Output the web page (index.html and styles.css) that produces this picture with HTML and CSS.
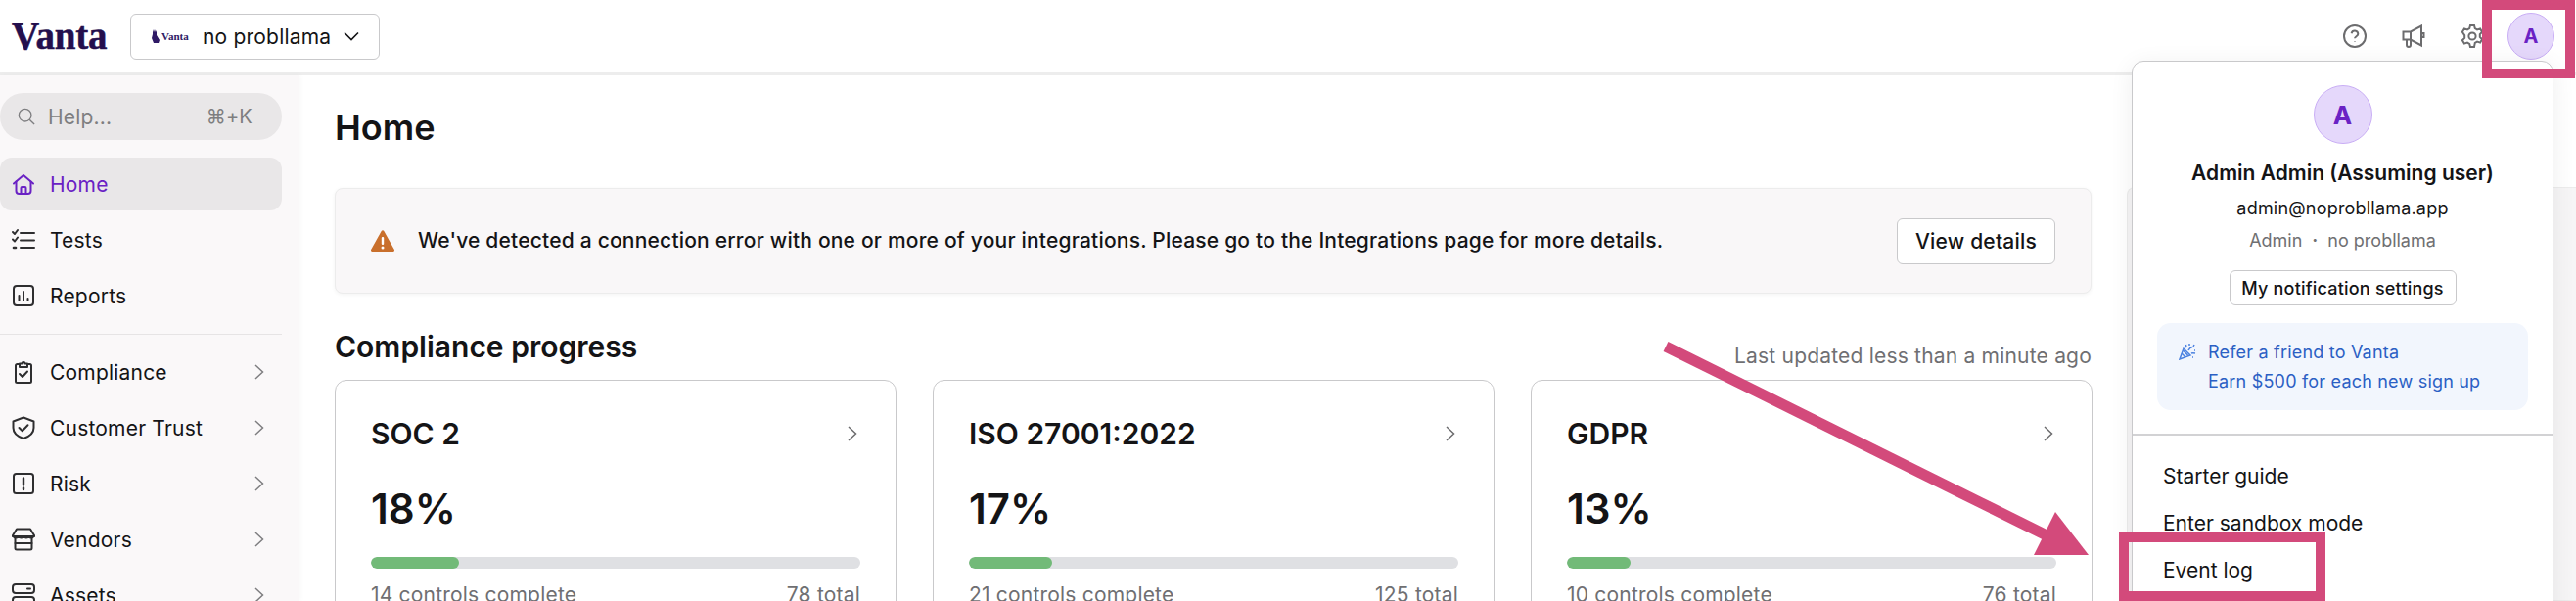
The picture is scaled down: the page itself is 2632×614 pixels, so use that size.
FILE: index.html
```html
<!DOCTYPE html>
<html lang="en">
<head>
<meta charset="utf-8">
<title>Vanta Home</title>
<link rel="stylesheet" href="styles.css">
</head>
<body>
<div class="app">
  <header class="topbar">
    <span class="logo">Vanta</span>
    <button class="org">
      <span class="org-logo">
        <svg class="org-rabbit" viewBox="0 0 10 14"><path d="M1 0l1 3 1-3 1 3 1-2v5l3 5-1 3H2L0 9l1-4z"/></svg>
        <span class="org-logo-text">Vanta</span>
      </span>
      <span class="org-name">no probllama</span>
      <svg class="org-chev" viewBox="0 0 16 10"><path d="M1 1.500l7 7 7-7"/></svg>
    </button>
    <div class="top-icons">
      <svg class="top-icon" viewBox="0 0 24 24"><circle cx="12" cy="12" r="11"/><path d="M8.600 9.200a3.400 3.400 0 0 1 6.700.6c0 2.300-3.300 2.500-3.300 4.400"/><path d="M12 17.400v.6"/></svg>
      <svg class="top-icon" viewBox="0 0 24 24"><path d="M1.500 7.500h7.500L20 1.500v20L9 15.500H1.500z"/><path d="M20 9h2.500v4H20"/><path d="M5 15.500V21a2 2 0 0 0 4 0v-5.500"/><path d="M9 7.500v8"/></svg>
      <svg class="top-icon" viewBox="0 0 24 24"><circle cx="12" cy="12" r="3.600"/><path d="M10 1h4l.8 3.200 2.200 1.200 3.100-1 2 3.400-2.300 2.300v2.800l2.300 2.300-2 3.400-3.100-1-2.200 1.200L14 23h-4l-.8-3.200-2.200-1.200-3.100 1-2-3.400 2.300-2.300v-2.800L1.900 7.800l2-3.400 3.100 1 2.200-1.200z"/></svg>
      <span class="avatar avatar-small">A</span>
    </div>
  </header>

  <div class="body">
    <aside class="sidebar">
      <div class="search">
        <svg class="search-icon" viewBox="0 0 20 20"><circle cx="8.500" cy="8.500" r="7"/><path d="M13.500 13.500l5.500 5.500"/></svg>
        <span class="search-text">Help...</span>
        <span class="search-key">⌘+K</span>
      </div>
      <nav class="nav">
        <a class="nav-item active">
          <svg class="nav-icon" viewBox="0 0 24 24"><path d="M2 11.500L12 3l10 8.500"/><path d="M4.500 9.500V19a3 3 0 0 0 3 3h9a3 3 0 0 0 3-3V9.500"/><path d="M9.500 22v-6a1 1 0 0 1 1-1h3a1 1 0 0 1 1 1v6"/></svg>
          <span>Home</span>
        </a>
        <a class="nav-item">
          <svg class="nav-icon" viewBox="0 0 24 24"><path d="M9 5h14M9 12.500h14M9 20h14"/><path d="M1 4l2 2 3-4M1 11.500l2 2 3-4"/><path d="M2 20h2" stroke-width="2.600"/></svg>
          <span>Tests</span>
        </a>
        <a class="nav-item">
          <svg class="nav-icon" viewBox="0 0 24 24"><rect x="2" y="2" width="20" height="20" rx="3"/><path d="M7.500 12v5M12 8v9M16.500 15v2"/></svg>
          <span>Reports</span>
        </a>
      </nav>
      <div class="nav-divider"></div>
      <nav class="nav">
        <a class="nav-item">
          <svg class="nav-icon" viewBox="0 0 24 24"><path d="M7 4H5.500A1.500 1.500 0 0 0 4 5.500V21.500A1.500 1.500 0 0 0 5.500 23h13a1.500 1.500 0 0 0 1.500-1.500V5.500A1.500 1.500 0 0 0 18.500 4H17"/><path d="M8 3.500h2.500a1.500 1.500 0 0 1 3 0H16V7H8z"/><path d="M8 14l3 3 5-5.500"/></svg>
          <span>Compliance</span>
          <svg class="nav-chev" viewBox="0 0 10 16"><path d="M1 1l7.500 7L1 15"/></svg>
        </a>
        <a class="nav-item">
          <svg class="nav-icon" viewBox="0 0 24 24"><path d="M12 1.500l10.500 4V12c0 5-4.500 9-10.500 11C6 21 1.500 17 1.500 12V5.500z"/><path d="M7.500 12l3.300 3.300 5.700-6"/></svg>
          <span>Customer Trust</span>
          <svg class="nav-chev" viewBox="0 0 10 16"><path d="M1 1l7.500 7L1 15"/></svg>
        </a>
        <a class="nav-item">
          <svg class="nav-icon" viewBox="0 0 24 24"><rect x="2" y="2" width="20" height="20" rx="2.500"/><path d="M12 6.500v7M12 16.500v1.500" stroke-width="2.400"/></svg>
          <span>Risk</span>
          <svg class="nav-chev" viewBox="0 0 10 16"><path d="M1 1l7.500 7L1 15"/></svg>
        </a>
        <a class="nav-item">
          <svg class="nav-icon" viewBox="0 0 24 24"><path d="M5 1.500h14l4 6.500v1H1V8z"/><path d="M1.500 9c1.700 2 3.500 2 5.200 0 1.800 2 3.600 2 5.300 0 1.800 2 3.600 2 5.300 0 1.700 2 3.500 2 5.200 0"/><path d="M3.500 11.500V21a1.500 1.500 0 0 0 1.500 1.500h14a1.500 1.500 0 0 0 1.500-1.500v-9.500"/><path d="M3.500 16h17"/></svg>
          <span>Vendors</span>
          <svg class="nav-chev" viewBox="0 0 10 16"><path d="M1 1l7.500 7L1 15"/></svg>
        </a>
        <a class="nav-item">
          <svg class="nav-icon" viewBox="0 0 24 24"><rect x="1" y="1" width="22" height="9" rx="3"/><rect x="1" y="14" width="22" height="9" rx="3"/><path d="M16 5.500h3"/></svg>
          <span>Assets</span>
          <svg class="nav-chev" viewBox="0 0 10 16"><path d="M1 1l7.500 7L1 15"/></svg>
        </a>
      </nav>
    </aside>

    <main class="main">
      <h1 class="page-title">Home</h1>
      <section class="alert">
        <svg class="alert-icon" viewBox="0 0 24 22"><path d="M10.700 1L.4 19.500A1.500 1.500 0 0 0 1.700 22h20.600a1.500 1.500 0 0 0 1.300-2.500L13.300 1a1.500 1.500 0 0 0-2.600 0z"/><rect class="alert-mark" x="10.800" y="7" width="2.400" height="8" rx="1"/><circle class="alert-mark" cx="12" cy="18" r="1.500"/></svg>
        <p class="alert-text">We've detected a connection error with one or more of your integrations. Please go to the Integrations page for more details.</p>
        <button class="btn-details">View details</button>
      </section>
      <div class="section-head">
        <h2 class="section-title">Compliance progress</h2>
        <span class="updated">Last updated less than a minute ago</span>
      </div>
      <div class="cards">
        <article class="card">
          <div class="card-head"><h3 class="card-title">SOC 2</h3><svg class="card-chev" viewBox="0 0 10 16"><path d="M1 1l7.500 7L1 15"/></svg></div>
          <div class="percent">18%</div>
          <div class="bar"><div class="bar-fill" style="width:18%"></div></div>
          <div class="card-foot"><span>14 controls complete</span><span>78 total</span></div>
        </article>
        <article class="card">
          <div class="card-head"><h3 class="card-title">ISO 27001:2022</h3><svg class="card-chev" viewBox="0 0 10 16"><path d="M1 1l7.500 7L1 15"/></svg></div>
          <div class="percent">17%</div>
          <div class="bar"><div class="bar-fill" style="width:17%"></div></div>
          <div class="card-foot"><span>21 controls complete</span><span>125 total</span></div>
        </article>
        <article class="card">
          <div class="card-head"><h3 class="card-title">GDPR</h3><svg class="card-chev" viewBox="0 0 10 16"><path d="M1 1l7.500 7L1 15"/></svg></div>
          <div class="percent">13%</div>
          <div class="bar"><div class="bar-fill" style="width:13%"></div></div>
          <div class="card-foot"><span>10 controls complete</span><span>76 total</span></div>
        </article>
      </div>
    </main>

    <div class="side-panel"></div>
  </div>
</div>

<div class="popup">
  <div class="popup-profile">
    <span class="avatar avatar-large">A</span>
    <div class="popup-name">Admin Admin (Assuming user)</div>
    <div class="popup-email">admin@noprobllama.app</div>
    <div class="popup-role"><span>Admin</span><span class="popup-dot">·</span><span>no probllama</span></div>
    <button class="btn-notify">My notification settings</button>
    <div class="refer">
      <svg class="refer-icon" viewBox="0 0 18 18"><path d="M1 17l4-11 7 7z"/><path d="M3 11l4 4M4.500 8l5 5"/><path d="M7 5c1-1 1-2 .5-3M10 8c1-2 2-3 4-3.500M13 11c1-.5 2-.5 4 0M11 1v2M16 2l-1 2M16 8h1M14 15h1"/></svg>
      <div class="refer-text">
        <div>Refer a friend to Vanta</div>
        <div>Earn $500 for each new sign up</div>
      </div>
    </div>
  </div>
  <ul class="popup-menu">
    <li>Starter guide</li>
    <li>Enter sandbox mode</li>
    <li>Event log</li>
  </ul>
</div>

<div class="mark mark-avatar"></div>
<div class="mark mark-log"></div>
<svg class="arrow" viewBox="0 0 2632 614"><path class="arrow-line" d="M1702 354L2095 549"/><path class="arrow-head" d="M2100 523L2078 567H2134z"/></svg>
</body>
</html>
```
FILE: styles.css
```css
* { box-sizing: border-box; }
html, body { margin: 0; height: 614px; overflow: hidden; background: #fff; }
body { font-family: Inter, "Liberation Sans", sans-serif; color: #141416; position: relative; }
h1, h2, h3, p, ul { margin: 0; padding: 0; }
button { font-family: inherit; color: inherit; background: #fff; cursor: pointer; }
svg { display: block; flex: none; }

.app { display: flex; flex-direction: column; height: 614px; }

.topbar { display: flex; align-items: center; height: 77px; flex: none; border-bottom: 3px solid #ededed; padding: 0 0 0 12px; }
.logo { font-family: "Liberation Serif", serif; font-weight: 700; font-size: 39px; line-height: 40px; color: #240f4d; width: 121px; letter-spacing: -.2px; -webkit-text-stroke: .5px #240f4d; }
.org { display: flex; align-items: center; width: 255px; height: 47px; border: 1px solid #c9c9cb; border-radius: 6px; padding: 0 20px 0 21px; }
.org-logo { display: flex; align-items: center; width: 52px; }
.org-rabbit { width: 10px; height: 14px; fill: #2f1a66; }
.org-logo-text { font-family: "Liberation Serif", serif; font-weight: 700; font-size: 11px; color: #2f1a66; }
.org-name { font-size: 21px; font-weight: 400; flex: 1; text-align: left; white-space: nowrap; letter-spacing: .2px; }
.org-chev { width: 16px; height: 10px; fill: none; stroke: #141416; stroke-width: 1.600; }

.top-icons { margin-left: auto; display: flex; align-items: center; }
.top-icon { width: 24px; height: 24px; fill: none; stroke: #6c6c6e; stroke-width: 2; margin-right: 36px; }
.avatar { display: flex; align-items: center; justify-content: center; border-radius: 50%; background: #e5d8fb; border: 1px solid #c9aef5; color: #6a22c4; font-weight: 700; }
.avatar-small { width: 48px; height: 48px; font-size: 20px; margin-left: -12px; margin-right: 22px; }
.avatar-large { width: 60px; height: 60px; font-size: 26px; }

.body { display: flex; flex: 1; min-height: 0; }

.sidebar { width: 306px; flex: none; background: #faf8f9; padding: 18px 18px 0 0; box-shadow: 1px 0 5px rgba(0, 0, 0, .03); position: relative; }
.search { display: flex; align-items: center; height: 48px; border-radius: 24px; background: #e9e7e8; padding: 0 30px 0 18px; color: #7e7e80; font-size: 21px; letter-spacing: .2px; }
.search-icon { width: 18px; height: 18px; fill: none; stroke: #7e7e80; stroke-width: 1.500; margin-right: 13px; }
.search-text { flex: 1; }
.search-key { font-size: 20px; }
.nav { display: flex; flex-direction: column; gap: 3px; }
.search + .nav { margin-top: 18px; }
.nav-item { display: flex; align-items: center; height: 54px; flex: none; padding-left: 12px; border-radius: 12px; font-size: 21px; letter-spacing: .2px; color: #141416; }
.nav-item span { flex: 1; margin-left: 15px; }
.nav-item.active { background: #e9e7e8; color: #6a22c4; }
.nav-icon { width: 24px; height: 24px; fill: none; stroke: #2e2e30; stroke-width: 2; stroke-linecap: round; stroke-linejoin: round; }
.nav-item.active .nav-icon { stroke: #6a22c4; }
.nav-chev { width: 10px; height: 16px; fill: none; stroke: #7e7e80; stroke-width: 1.500; margin-right: 18px; }
.nav-divider { height: 1px; background: #e6e4e5; margin: 12px 0 11px; }

.main { width: 1867px; flex: none; padding: 31px 36px 0; }
.page-title { font-size: 36px; font-weight: 600; line-height: 44px; }
.alert { display: flex; align-items: center; height: 108px; margin-top: 40px; padding: 0 36px 0 36px; background: #f9f7f8; border: 1px solid #ececec; border-radius: 8px; box-shadow: 0 1px 4px rgba(0, 0, 0, .05); }
.alert-icon { width: 24px; height: 22px; fill: #c96f2c; }
.alert-mark { fill: #fff; }
.alert-text { flex: 1; margin-left: 24px; font-size: 21px; font-weight: 500; line-height: 28px; white-space: nowrap; letter-spacing: .2px; }
.btn-details { width: 162px; height: 47px; border: 1px solid #c9c9cb; border-radius: 6px; font-size: 21px; font-weight: 500; padding: 0; letter-spacing: .2px; }

.section-head { display: flex; justify-content: space-between; align-items: flex-end; height: 42px; margin-top: 34px; }
.section-title { font-size: 30px; font-weight: 600; line-height: 40px; margin-bottom: 2px; }
.updated { font-size: 21px; line-height: 24px; color: #6f6f72; white-space: nowrap; letter-spacing: .2px; }

.cards { display: grid; grid-template-columns: repeat(3, 574px); gap: 37px; margin-top: 12px; }
.card { height: 300px; border: 1px solid #c9c9cb; border-radius: 12px; padding: 36px 36px 0; }
.card-head { display: flex; justify-content: space-between; align-items: center; height: 36px; }
.card-title { font-size: 30px; font-weight: 600; line-height: 36px; white-space: nowrap; }
.card-chev { width: 10px; height: 16px; fill: none; stroke: #6c6c6e; stroke-width: 1.500; margin-right: 3px; }
.percent { font-size: 42px; font-weight: 600; line-height: 52px; margin-top: 33px; }
.bar { height: 12px; border-radius: 6px; background: #dfe0e3; margin-top: 23px; overflow: hidden; }
.bar-fill { height: 12px; border-radius: 6px; background: #72ba78; }
.card-foot { display: flex; justify-content: space-between; font-size: 21px; letter-spacing: .2px; line-height: 28px; color: #6f6f72; margin-top: 13px; }

.side-panel { flex: 1; margin-top: 114px; background: #f6f5f6; border: 1px solid #ececec; border-right: 0; border-radius: 8px 0 0 0; }

.popup { position: absolute; left: 2178px; top: 62px; width: 431px; height: 600px; background: #fff; border: 1px solid #c9c9cb; border-radius: 12px; box-shadow: 0 4px 24px rgba(0, 0, 0, .07); }
.popup-profile { display: flex; flex-direction: column; align-items: center; padding: 24px 25px 0; height: 382px; border-bottom: 2px solid #d2d2d4; }
.popup-name { font-size: 21px; font-weight: 600; line-height: 28px; margin-top: 16px; white-space: nowrap; }
.popup-email { font-size: 18px; line-height: 24px; margin-top: 10px; white-space: nowrap; letter-spacing: .2px; }
.popup-role { display: flex; gap: 10px; font-size: 18px; line-height: 24px; color: #6f6f72; margin-top: 9px; white-space: nowrap; }
.popup-dot { font-weight: 700; }
.btn-notify { width: 232px; height: 36px; border: 1px solid #c9c9cb; border-radius: 6px; font-size: 18px; font-weight: 500; margin-top: 18px; padding: 0; white-space: nowrap; letter-spacing: .2px; }
.refer { display: flex; align-self: stretch; height: 89px; margin-top: 18px; background: #f2f6fd; border-radius: 14px; padding: 15px 0 0 22px; color: #2b5fc4; font-size: 18px; line-height: 30px; letter-spacing: .2px; }
.refer-icon { width: 18px; height: 18px; fill: none; stroke: #4c82e0; stroke-width: 1.500; margin: 5px 12px 0 0; }
.popup-menu { list-style: none; padding: 18px 0 0 31px; font-size: 21px; }
.popup-menu li { height: 48px; line-height: 48px; }

.mark { position: absolute; border: 10px solid #d34a7b; }
.mark-avatar { left: 2536px; top: 0; width: 95px; height: 80px; }
.mark-log { left: 2165px; top: 544px; width: 211px; height: 70px; }
.arrow { position: absolute; left: 0; top: 0; width: 2632px; height: 614px; pointer-events: none; }
.arrow-line { stroke: #d34a7b; stroke-width: 11; fill: none; }
.arrow-head { fill: #d34a7b; }
```
